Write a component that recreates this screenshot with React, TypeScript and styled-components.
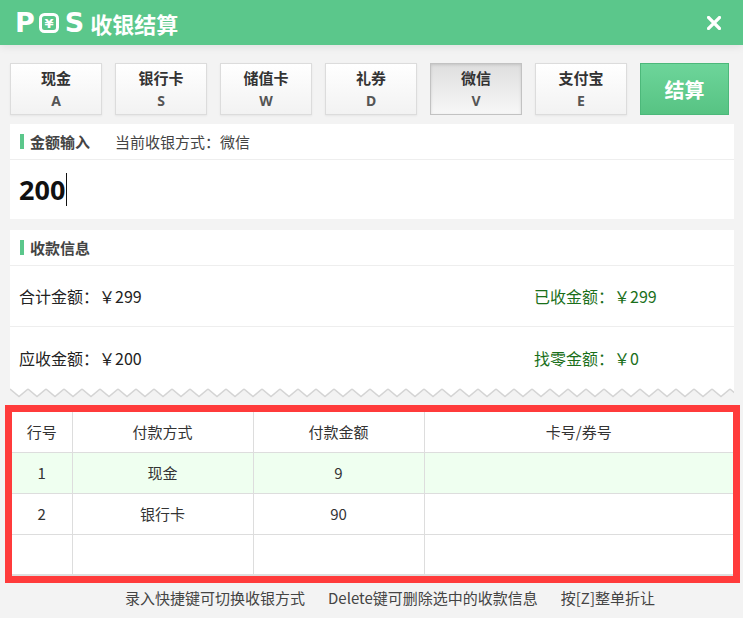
import styled, { createGlobalStyle } from "styled-components";

type Method = {
    name: string;
    key: string;
};

type Payment = {
    no: number;
    method: string;
    amount: string;
    card: string;
};

const methods: Method[] = [
    { name: "现金", key: "A" },
    { name: "银行卡", key: "S" },
    { name: "储值卡", key: "W" },
    { name: "礼券", key: "D" },
    { name: "微信", key: "V" },
    { name: "支付宝", key: "E" },
];

const payments: Payment[] = [
    { no: 1, method: "现金", amount: "9", card: "" },
    { no: 2, method: "银行卡", amount: "90", card: "" },
];

const GlobalStyle = createGlobalStyle`
    html, body {
        margin: 0;
        padding: 0;
        background: #f3f3f3;
    }
    body {
        font-family: "Noto Sans CJK SC", "Noto Sans", sans-serif;
        color: #333;
    }
    * {
        box-sizing: border-box;
    }
`;

export default function App() {
    const current = "微信";

    return (
        <Window>
            <GlobalStyle />
            <Header>
                <Title>
                    <LogoLetter>P</LogoLetter>
                    <LogoBadge width="20" height="20" viewBox="0 0 20 20">
                        <rect x="1.5" y="1.5" width="17" height="17" rx="4" fill="none" stroke="#fff" strokeWidth="3" />
                        <text x="10" y="15" textAnchor="middle" fontSize="13" fontWeight="700" fill="#fff" fontFamily="DejaVu Sans, sans-serif">¥</text>
                    </LogoBadge>
                    <LogoLetter>S</LogoLetter>
                    <TitleText>收银结算</TitleText>
                </Title>
                <CloseButton aria-label="关闭">
                    <svg width="14" height="14" viewBox="0 0 14 14">
                        <path d="M1.5 1.5 L12.5 12.5 M12.5 1.5 L1.5 12.5" stroke="#fff" strokeWidth="3.2" strokeLinecap="square" />
                    </svg>
                </CloseButton>
            </Header>

            <MethodRow>
                {methods.map((m) => (
                    <MethodButton key={m.key} $active={m.name === current}>
                        <MethodName>{m.name}</MethodName>
                        <MethodKey>{m.key}</MethodKey>
                    </MethodButton>
                ))}
                <SettleButton>结算</SettleButton>
            </MethodRow>

            <Panel>
                <PanelHeader>
                    <Marker />
                    <PanelTitle>金额输入</PanelTitle>
                    <PanelNote>当前收银方式：{current}</PanelNote>
                </PanelHeader>
                <AmountInput>
                    <AmountValue>200</AmountValue>
                    <Caret />
                </AmountInput>
            </Panel>

            <ReceiptPanel>
                <PanelHeader>
                    <Marker />
                    <PanelTitle>收款信息</PanelTitle>
                </PanelHeader>
                <InfoRow>
                    <InfoText>合计金额：￥299</InfoText>
                    <InfoText $green>已收金额：￥299</InfoText>
                </InfoRow>
                <InfoRow $last>
                    <InfoText>应收金额：￥200</InfoText>
                    <InfoText $green>找零金额：￥0</InfoText>
                </InfoRow>
                <TornEdge width="100%" height="10" preserveAspectRatio="none">
                    <defs>
                        <pattern id="zigzag" width="18" height="10" patternUnits="userSpaceOnUse">
                            <path d="M0 0 L18 0 L18 1 L9 8.5 L0 1 Z" fill="#fff" />
                            <path d="M0 1 L9 8.5 L18 1" fill="none" stroke="#d4d4d4" strokeWidth="1.6" />
                        </pattern>
                    </defs>
                    <rect x="0" y="0" width="100%" height="10" fill="url(#zigzag)" />
                </TornEdge>
            </ReceiptPanel>

            <TableFrame>
                <PayTable>
                    <colgroup>
                        <col style={{ width: 60 }} />
                        <col style={{ width: 181 }} />
                        <col style={{ width: 171 }} />
                        <col />
                    </colgroup>
                    <thead>
                        <tr>
                            <HeadCell>行号</HeadCell>
                            <HeadCell>付款方式</HeadCell>
                            <HeadCell>付款金额</HeadCell>
                            <HeadCell>卡号/券号</HeadCell>
                        </tr>
                    </thead>
                    <tbody>
                        {payments.map((p, i) => (
                            <BodyRow key={p.no} $selected={i === 0}>
                                <Cell>{p.no}</Cell>
                                <Cell>{p.method}</Cell>
                                <Cell>{p.amount}</Cell>
                                <Cell>{p.card}</Cell>
                            </BodyRow>
                        ))}
                        <BodyRow $last>
                            <Cell />
                            <Cell />
                            <Cell />
                            <Cell />
                        </BodyRow>
                    </tbody>
                </PayTable>
            </TableFrame>

            <Footer>
                <span>录入快捷键可切换收银方式</span>
                <span>Delete键可删除选中的收款信息</span>
                <span>按[Z]整单折让</span>
            </Footer>
        </Window>
    );
}

const Window = styled.div`
    width: 743px;
    height: 618px;
    background: #f3f3f3;
    overflow: hidden;
`;

const Header = styled.div`
    height: 45px;
    background: #5bc78b;
    display: flex;
    align-items: center;
    justify-content: space-between;
    padding: 0 22px 0 15px;
    box-shadow: 0 2px 8px rgba(0, 0, 0, 0.08);
    position: relative;
`;

const Title = styled.div`
    display: flex;
    align-items: center;
    color: #fff;
`;

const LogoLetter = styled.span`
    font-family: "DejaVu Sans", sans-serif;
    font-weight: 700;
    font-size: 27px;
    line-height: 1;
    color: #fff;
`;

const LogoBadge = styled.svg`
    margin: 0 6px 0 4px;
    display: block;
`;

const TitleText = styled.span`
    font-size: 22px;
    font-weight: 700;
    margin-left: 6px;
`;

const CloseButton = styled.button`
    background: none;
    border: none;
    padding: 0;
    display: flex;
    cursor: pointer;
`;

const MethodRow = styled.div`
    display: flex;
    gap: 13px;
    padding: 18px 0 0 10px;
    height: 70px;
    margin-bottom: 9px;
`;

const MethodButton = styled.button<{ $active?: boolean }>`
    width: 92px;
    height: 52px;
    display: flex;
    flex-direction: column;
    align-items: center;
    padding: 3px 0 0;
    border: 1px solid ${(p) => (p.$active ? "#c2c2c2" : "#dcdcdc")};
    background: ${(p) =>
        p.$active
            ? "linear-gradient(#dedede, #f7f7f7)"
            : "linear-gradient(#ffffff, #f2f2f2)"};
    box-shadow: ${(p) =>
        p.$active ? "inset 0 1px 3px rgba(0,0,0,0.12)" : "0 1px 2px rgba(0,0,0,0.06)"};
    font-family: inherit;
    cursor: pointer;
`;

const MethodName = styled.span`
    font-size: 15px;
    font-weight: 700;
    color: #333;
    line-height: 22px;
`;

const MethodKey = styled.span`
    font-family: "Noto Sans", sans-serif;
    font-size: 14px;
    font-weight: 700;
    color: #555;
    line-height: 20px;
    margin-top: 2px;
`;

const SettleButton = styled.button`
    width: 89px;
    height: 52px;
    border: 1px solid #4cb87a;
    background: linear-gradient(#6dd59a, #57c383);
    color: #fff;
    font-family: inherit;
    font-size: 20px;
    font-weight: 700;
    padding: 0;
    cursor: pointer;
`;

const Panel = styled.div`
    margin: 0 9px 0 10px;
    background: #fff;
    height: 95px;
`;

const PanelHeader = styled.div`
    height: 36px;
    display: flex;
    align-items: center;
    padding-left: 10px;
    border-bottom: 1px solid #eeeeee;
`;

const Marker = styled.span`
    width: 4px;
    height: 15px;
    background: #5bc78b;
    margin-right: 6px;
`;

const PanelTitle = styled.span`
    font-size: 15px;
    font-weight: 700;
    color: #444;
`;

const PanelNote = styled.span`
    font-size: 15px;
    color: #444;
    margin-left: 25px;
`;

const AmountInput = styled.div`
    height: 59px;
    display: flex;
    align-items: center;
    padding-left: 9px;
`;

const AmountValue = styled.span`
    font-family: "Noto Sans", sans-serif;
    font-size: 27px;
    font-weight: 700;
    color: #111;
    line-height: 1;
`;

const Caret = styled.span`
    width: 1px;
    height: 33px;
    background: #111;
    margin-left: 1px;
`;

const ReceiptPanel = styled.div`
    margin: 11px 9px 0 10px;
    background: #fff;
    position: relative;
`;

const InfoRow = styled.div<{ $last?: boolean }>`
    height: 61px;
    display: flex;
    align-items: center;
    justify-content: space-between;
    padding-left: 9px;
    border-bottom: ${(p) => (p.$last ? "none" : "1px solid #eeeeee")};
`;

const InfoText = styled.span<{ $green?: boolean }>`
    font-size: 16px;
    color: ${(p) => (p.$green ? "#1a6f1a" : "#222")};
    width: ${(p) => (p.$green ? "200px" : "auto")};
`;

const TornEdge = styled.svg`
    display: block;
    background: #f3f3f3;
`;

const TableFrame = styled.div`
    margin: 7px 3px 0 5px;
    border: 7px solid #ff3b3b;
    background: #fff;
`;

const PayTable = styled.table`
    width: 100%;
    border-collapse: collapse;
    table-layout: fixed;
    font-size: 15px;
    color: #333;
`;

const HeadCell = styled.th`
    height: 40px;
    font-weight: 400;
    text-align: center;
    border-bottom: 1px solid #dddddd;
    border-right: 1px solid #dddddd;
    padding: 0;
    &:last-child {
        border-right: none;
    }
`;

const BodyRow = styled.tr<{ $selected?: boolean; $last?: boolean }>`
    background: ${(p) => (p.$selected ? "#effff0" : "#fff")};
    & > td {
        border-bottom: ${(p) => (p.$last ? "2px solid #dedede" : "1px solid #dddddd")};
    }
`;

const Cell = styled.td`
    height: 41px;
    text-align: center;
    padding: 0;
    border-right: 1px solid #dddddd;
    &:last-child {
        border-right: none;
    }
`;

const Footer = styled.div`
    display: flex;
    gap: 23px;
    padding: 3px 0 0 125px;
    font-size: 15px;
    color: #444;
    line-height: 24px;
`;
